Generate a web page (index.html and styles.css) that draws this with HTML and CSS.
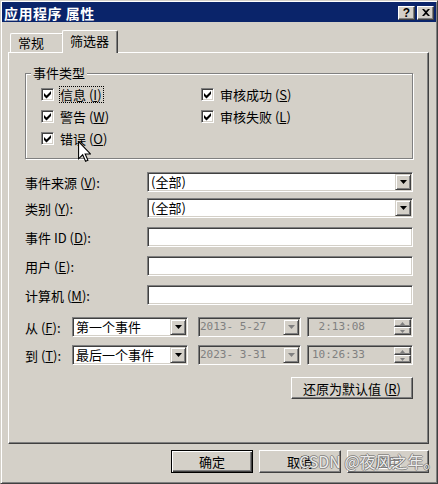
FILE: index.html
```html
<!DOCTYPE html>
<html lang="zh-CN">
<head>
<meta charset="utf-8">
<title>应用程序 属性</title>
<link rel="stylesheet" href="styles.css">
</head>
<body>
<div class="window">
  <div class="titlebar">
    <span class="title">应用程序 属性</span>
    <div class="tbtns">
      <span class="tbtn q">?</span>
      <span class="tbtn"><svg width="8" height="7" viewBox="0 0 8 7"><path d="M0 0h2l2 2 2-2h2L5 3.5 8 7H6L4 5 2 7H0l3-3.5z" fill="#000"/></svg></span>
    </div>
  </div>

  <div class="tabs">
    <div class="tab">常规</div>
    <div class="tab active">筛选器</div>
  </div>

  <div class="panel">
    <div class="group">
      <div class="group-title">事件类型</div>
      <div class="checks">
        <div class="chk"><span class="box"><svg width="11" height="11" viewBox="0 0 11 11"><path d="M2 4L4.5 6.5L9 2V5L4.5 9.5L2 7Z" fill="#000"/></svg></span><span class="lbl focus">信息 (<u>I</u>)</span></div>
        <div class="chk"><span class="box"><svg width="11" height="11" viewBox="0 0 11 11"><path d="M2 4L4.5 6.5L9 2V5L4.5 9.5L2 7Z" fill="#000"/></svg></span><span class="lbl">审核成功 (<u>S</u>)</span></div>
        <div class="chk"><span class="box"><svg width="11" height="11" viewBox="0 0 11 11"><path d="M2 4L4.5 6.5L9 2V5L4.5 9.5L2 7Z" fill="#000"/></svg></span><span class="lbl">警告 (<u>W</u>)</span></div>
        <div class="chk"><span class="box"><svg width="11" height="11" viewBox="0 0 11 11"><path d="M2 4L4.5 6.5L9 2V5L4.5 9.5L2 7Z" fill="#000"/></svg></span><span class="lbl">审核失败 (<u>L</u>)</span></div>
        <div class="chk"><span class="box"><svg width="11" height="11" viewBox="0 0 11 11"><path d="M2 4L4.5 6.5L9 2V5L4.5 9.5L2 7Z" fill="#000"/></svg></span><span class="lbl">错误 (<u>O</u>)</span></div>
      </div>
    </div>

    <div class="row r1">
      <span class="label">事件来源 (<u>V</u>):</span>
      <div class="field combo"><span class="val">(全部)</span><span class="ddbtn"><svg width="7" height="4" viewBox="0 0 7 4"><path d="M0 0H7L3.5 4Z" fill="#000"/></svg></span></div>
    </div>
    <div class="row r2">
      <span class="label">类别 (<u>Y</u>):</span>
      <div class="field combo"><span class="val">(全部)</span><span class="ddbtn"><svg width="7" height="4" viewBox="0 0 7 4"><path d="M0 0H7L3.5 4Z" fill="#000"/></svg></span></div>
    </div>
    <div class="row r3">
      <span class="label">事件 ID (<u>D</u>):</span>
      <div class="field"></div>
    </div>
    <div class="row r3">
      <span class="label">用户 (<u>E</u>):</span>
      <div class="field"></div>
    </div>
    <div class="row r3">
      <span class="label">计算机 (<u>M</u>):</span>
      <div class="field"></div>
    </div>

    <div class="row r6">
      <span class="label short">从 (<u>F</u>):</span>
      <div class="field combo c-event"><span class="val">第一个事件</span><span class="ddbtn"><svg width="7" height="4" viewBox="0 0 7 4"><path d="M0 0H7L3.5 4Z" fill="#000"/></svg></span></div>
      <div class="field combo c-date disabled"><span class="val mono">2013- 5-27</span><span class="ddbtn"><svg width="7" height="4" viewBox="0 0 7 4"><path d="M0 0H7L3.5 4Z" fill="#808080"/></svg></span></div>
      <div class="field c-time disabled"><span class="val mono"> 2:13:08</span><span class="spin"><span class="sbtn"><svg width="5" height="3" viewBox="0 0 5 3"><path d="M0 3H5L2.5 0Z" fill="#808080"/></svg></span><span class="sbtn"><svg width="5" height="3" viewBox="0 0 5 3"><path d="M0 0H5L2.5 3Z" fill="#808080"/></svg></span></span></div>
    </div>
    <div class="row r7">
      <span class="label short">到 (<u>T</u>):</span>
      <div class="field combo c-event"><span class="val">最后一个事件</span><span class="ddbtn"><svg width="7" height="4" viewBox="0 0 7 4"><path d="M0 0H7L3.5 4Z" fill="#000"/></svg></span></div>
      <div class="field combo c-date disabled"><span class="val mono">2023- 3-31</span><span class="ddbtn"><svg width="7" height="4" viewBox="0 0 7 4"><path d="M0 0H7L3.5 4Z" fill="#808080"/></svg></span></div>
      <div class="field c-time disabled"><span class="val mono">10:26:33</span><span class="spin"><span class="sbtn"><svg width="5" height="3" viewBox="0 0 5 3"><path d="M0 3H5L2.5 0Z" fill="#808080"/></svg></span><span class="sbtn"><svg width="5" height="3" viewBox="0 0 5 3"><path d="M0 0H5L2.5 3Z" fill="#808080"/></svg></span></span></div>
    </div>

    <div class="actions">
      <div class="btn restore">还原为默认值 (<u>R</u>)</div>
    </div>
  </div>

  <div class="buttons">
    <div class="btn default">确定</div>
    <div class="btn">取消</div>
    <div class="btn disabled-btn">应用</div>
  </div>

  <svg class="cursor" width="13" height="21" viewBox="0 0 12 19.5"><path d="M0.5 0.5V16.5L4.3 12.8L7 18.8L9.2 17.8L6.6 12H11.5Z" fill="#fff" stroke="#000" stroke-width="1"/></svg>
  <div class="watermark">CSDN @夜风之年。</div>
</div>
</body>
</html>
```

FILE: styles.css
```css
* { box-sizing: border-box; }
html, body { margin: 0; padding: 0; }
body {
  width: 438px;
  height: 484px;
  overflow: hidden;
  background: #d4d0c8;
  font-family: "Noto Sans CJK SC", sans-serif;
  font-size: 13px;
  line-height: 15px;
  color: #000;
}
u { text-decoration-thickness: 1px; text-underline-offset: 1px; }

.window {
  position: relative;
  width: 438px;
  height: 484px;
  background: #d4d0c8;
  border: 1px solid;
  border-color: #d4d0c8 #404040 #404040 #d4d0c8;
  box-shadow: inset 1px 1px #fff, inset -1px -1px #808080;
  padding: 1px;
}

.titlebar {
  height: 20px;
  background: #0a246a;
  color: #fff;
  display: flex;
  align-items: center;
  justify-content: space-between;
  padding: 1px 2px 0 2px;
}
.title { font-weight: bold; font-size: 14px; line-height: 16px; letter-spacing: 0.5px; }
.tbtns { display: flex; gap: 2px; }
.tbtn {
  width: 17px;
  height: 14px;
  background: #d4d0c8;
  border: 1px solid;
  border-color: #fff #404040 #404040 #fff;
  box-shadow: inset -1px -1px #808080;
  display: flex;
  align-items: center;
  justify-content: center;
  color: #000;
  font: bold 12px/12px "Liberation Sans", sans-serif;
}

.tabs {
  height: 30px;
  display: flex;
  align-items: flex-end;
  padding-left: 8px;
}
.tab {
  height: 19px;
  width: 54px;
  padding-left: 7px;
  border: 1px solid;
  border-bottom: 0;
  border-color: #fff #404040 #fff #fff;
  box-shadow: inset -1px 0 #808080;
  border-radius: 2px 2px 0 0;
  line-height: 17px;
  background: #d4d0c8;
}
.tab.active {
  position: relative;
  z-index: 1;
  height: 23px;
  width: 56px;
  margin-left: -2px;
  margin-bottom: -1px;
  line-height: 20px;
}

.panel {
  margin: 0 7px 0 6px;
  height: 392px;
  border: 1px solid;
  border-color: #fff #404040 #404040 #fff;
  box-shadow: inset -1px -1px #808080;
  padding-left: 16px;
}

.group {
  width: 388px;
  height: 86px;
  margin-top: 20px;
  border: 1px solid #808080;
  box-shadow: inset 1px 1px #fff, 1px 1px #fff;
}
.group-title {
  display: block;
  width: fit-content;
  margin: -8px 0 0 5px;
  padding: 0 2px;
  background: #d4d0c8;
  line-height: 14px;
}
.checks {
  margin-top: 3px;
  padding-left: 15px;
  display: grid;
  grid-template-columns: 160px 1fr;
  grid-auto-rows: 22px;
}
.chk { display: flex; align-items: center; }
.box {
  flex: none;
  width: 13px;
  height: 13px;
  background: #fff;
  border: 1px solid;
  border-color: #808080 #fff #fff #808080;
  box-shadow: inset 1px 1px #404040, inset -1px -1px #d4d0c8;
  display: block;
}
.box svg { display: block; }
.lbl {
  margin-left: 5px;
  border: 1px dotted transparent;
  line-height: 15px;
  padding-right: 1px;
}
.lbl.focus { border-color: #000; }

.row { display: flex; align-items: center; }
.r1 { margin-top: 13px; }
.r2 { margin-top: 6px; }
.r3 { margin-top: 9px; }
.r6 { margin-top: 12px; }
.r7 { margin-top: 8px; }
.label { width: 122px; flex: none; white-space: nowrap; }
.label.short { width: 47px; }

.field {
  width: 266px;
  height: 20px;
  flex: none;
  background: #fff;
  border: 1px solid;
  border-color: #808080 #fff #fff #808080;
  box-shadow: inset 1px 1px #404040, inset -1px -1px #d4d0c8;
  padding: 1px;
  display: flex;
  align-items: center;
}
.field.disabled { background: #d4d0c8; color: #808080; }
.val { flex: 1; padding-left: 2px; white-space: pre; line-height: 16px; }
.mono { font-family: "DejaVu Sans Mono", monospace; font-size: 11px; padding-left: 0; }
.c-time .mono { padding-left: 3px; }
.ddbtn {
  flex: none;
  width: 16px;
  height: 16px;
  background: #d4d0c8;
  border: 1px solid;
  border-color: #d4d0c8 #404040 #404040 #d4d0c8;
  box-shadow: inset 1px 1px #fff, inset -1px -1px #808080;
  display: flex;
  align-items: center;
  justify-content: center;
}
.ddbtn svg { display: block; }
.c-event { width: 116px; }
.c-date { width: 103px; margin-left: 10px; }
.c-time { width: 106px; margin-left: 6px; }
.spin { flex: none; display: flex; flex-direction: column; width: 17px; height: 16px; }
.sbtn {
  height: 8px;
  background: #d4d0c8;
  border: 1px solid;
  border-color: #fff #404040 #404040 #fff;
  box-shadow: inset -1px -1px #808080;
  display: flex;
  align-items: center;
  justify-content: center;
}
.sbtn svg { display: block; }

.actions { width: 388px; display: flex; justify-content: flex-end; margin-top: 12px; }
.btn {
  height: 23px;
  width: 82px;
  background: #d4d0c8;
  border: 1px solid;
  border-color: #fff #404040 #404040 #fff;
  box-shadow: inset -1px -1px #808080;
  display: flex;
  align-items: center;
  justify-content: center;
  line-height: 15px;
  white-space: nowrap;
}
.btn.restore { width: 122px; height: 22px; }
.btn.default {
  border-color: #000;
  box-shadow: inset 1px 1px #fff, inset -1px -1px #404040, inset -2px -2px #808080;
}
.btn.disabled-btn { color: #808080; text-shadow: 1px 1px #fff; }

.buttons {
  display: flex;
  justify-content: flex-end;
  gap: 6px;
  margin: 6px 7px 0 0;
}

.cursor { position: absolute; left: 77px; top: 140px; }
.watermark {
  position: absolute;
  left: 298px;
  top: 451px;
  font-size: 16px;
  line-height: 19px;
  color: rgba(250, 250, 250, 0.92);
  text-shadow: -1px 0 rgba(90, 90, 90, 0.55), 1px 0 rgba(90, 90, 90, 0.55), 0 -1px rgba(90, 90, 90, 0.55), 0 1px rgba(90, 90, 90, 0.55);
  white-space: nowrap;
}
```
